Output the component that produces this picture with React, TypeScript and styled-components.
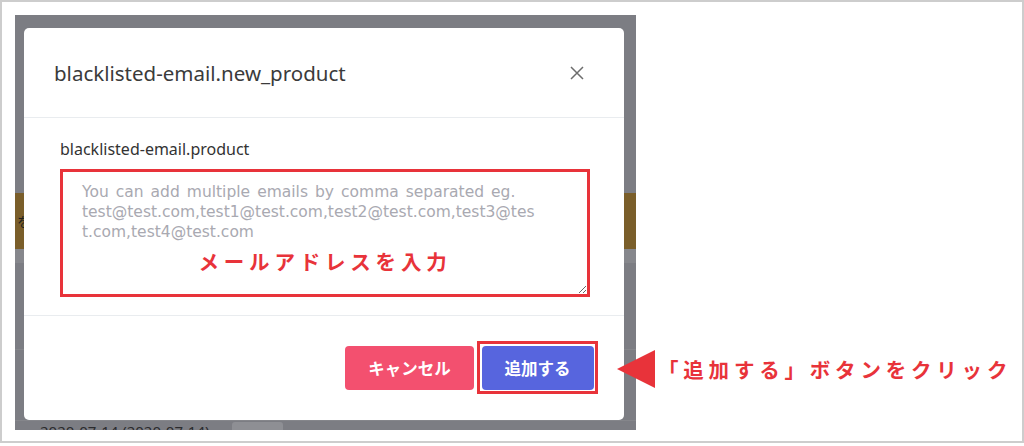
import React from "react"
import styled, { createGlobalStyle } from "styled-components"

const GlobalStyle = createGlobalStyle`
    html, body {
        margin: 0;
        padding: 0;
        background: #ffffff;
    }
    body {
        font-family: "Noto Sans", "Noto Sans CJK JP", sans-serif;
    }
    * {
        box-sizing: border-box;
    }
`

const colors = {
    annotation: "#e8333a",
    dim: "#7c7d83",
    divider: "#e9ecef",
    cancel: "#f3506f",
    primary: "#5765de",
}

const Frame = styled.div`
    width: 1024px;
    height: 443px;
    border: 2px solid #cdcdcd;
    display: flex;
    align-items: flex-start;
    padding: 13px 0 0 13px;
`

// the dimmed app screenshot
const Screen = styled.div`
    position: relative;
    flex-shrink: 0;
    width: 621px;
    height: 415px;
    background: ${colors.dim};
    overflow: hidden;
`

const Page = styled.div`
    display: flex;
    flex-direction: column;
    height: 100%;
    & > * {
        flex-shrink: 0;
    }
`
const PageTop = styled.div`
    height: 178px;
`
const Banner = styled.div`
    height: 56px;
    background: #7a5e2a;
    color: #1f1f1f;
    font-family: "Noto Sans CJK JP", sans-serif;
    font-size: 14px;
    line-height: 56px;
    padding-left: 2px;
    white-space: nowrap;
`
const BannerGap = styled.div`
    height: 14px;
    background: #86878c;
`
const TableRow = styled.div<{ h: number }>`
    height: ${p => p.h}px;
    border-bottom: 1px solid #85868b;
`
const DateRow = styled.div`
    display: flex;
    align-items: flex-start;
    padding-left: 25px;
`
const DateCell = styled.div`
    width: 192px;
    font-size: 15px;
    line-height: 20px;
    color: #2b2b2e;
`
const DetailButton = styled.div`
    width: 51px;
    height: 28px;
    margin-top: 1px;
    background: #8e8f94;
    border-radius: 3px;
    color: #4a4a4e;
    font-family: "Noto Sans CJK JP", sans-serif;
    font-size: 13px;
    display: flex;
    align-items: center;
    justify-content: center;
`

const Modal = styled.div`
    position: absolute;
    top: 13px;
    left: 9px;
    right: 12px;
    bottom: 10px;
    background: #ffffff;
    border-radius: 5px;
    display: flex;
    flex-direction: column;
`
const Header = styled.div`
    height: 90px;
    flex-shrink: 0;
    display: flex;
    align-items: center;
    justify-content: space-between;
    padding: 0 40px 0 30px;
    border-bottom: 1px solid ${colors.divider};
`
const Title = styled.h5`
    margin: 0;
    font-family: "Noto Sans", sans-serif;
    font-weight: 400;
    font-size: 20.5px;
    color: #3b3b3b;
`
const CloseButton = styled.button`
    border: none;
    background: none;
    padding: 0;
    width: 14px;
    height: 14px;
    display: flex;
    color: #6d6d6d;
`

const Body = styled.div`
    padding: 20px 34px 18px 36px;
    border-bottom: 1px solid ${colors.divider};
`
const Label = styled.div`
    font-size: 16px;
    line-height: 22px;
    color: #333333;
    margin-bottom: 9px;
`
const Field = styled.div`
    position: relative;
    height: 128px;
    border: 3px solid ${colors.annotation};
`
const TextArea = styled.textarea`
    display: block;
    width: 100%;
    height: 100%;
    border: none;
    outline: none;
    resize: vertical;
    padding: 10px 8px 0 19px;
    font-family: "DejaVu Sans", sans-serif;
    font-size: 15.5px;
    line-height: 20px;
    word-spacing: 2.1px;
    color: #333;
    &::placeholder {
        color: #a9a9b1;
    }
`
const FieldNote = styled.div`
    position: absolute;
    left: 0;
    right: 0;
    top: 77px;
    display: flex;
    justify-content: center;
    font-family: "Noto Sans CJK JP", sans-serif;
    font-weight: 700;
    font-size: 20.5px;
    line-height: 24px;
    letter-spacing: 4.8px;
    color: ${colors.annotation};
    pointer-events: none;
`

const Footer = styled.div`
    flex: 1;
    display: flex;
    justify-content: flex-end;
    align-items: flex-start;
    gap: 3px;
    padding: 25px 26px 0 0;
`
const Button = styled.button<{ variant: "cancel" | "primary" }>`
    height: 44px;
    width: ${p => p.variant === "cancel" ? 129 : 112}px;
    margin-top: ${p => p.variant === "cancel" ? 5 : 0}px;
    border: none;
    border-radius: 4px;
    background: ${p => p.variant === "cancel" ? colors.cancel : colors.primary};
    color: #ffffff;
    font-family: "Noto Sans CJK JP", sans-serif;
    font-weight: 700;
    font-size: 16.5px;
`
const Highlight = styled.div`
    border: 3px solid ${colors.annotation};
    padding: 1.5px;
    display: flex;
`

const Callout = styled.div`
    display: flex;
    align-items: center;
    gap: 3px;
    margin-top: 335px;
    margin-left: -19px;
    position: relative;
`
const Arrow = styled.div`
    width: 0;
    height: 0;
    border-top: 19px solid transparent;
    border-bottom: 19px solid transparent;
    border-right: 38px solid ${colors.annotation};
`
const CalloutText = styled.div`
    font-family: "Noto Sans CJK JP", sans-serif;
    font-weight: 700;
    font-size: 20.5px;
    letter-spacing: 4.8px;
    color: ${colors.annotation};
    white-space: nowrap;
`

const App: React.FC = () => {
    return (
        <>
            <GlobalStyle />
            <Frame>
                <Screen>
                    <Page>
                        <PageTop />
                        <Banner>を確認してください</Banner>
                        <BannerGap />
                        <TableRow h={87} />
                        <TableRow h={71} />
                        <DateRow>
                            <DateCell>2020-07-14 (2020-07-14)</DateCell>
                            <DetailButton>詳細</DetailButton>
                        </DateRow>
                    </Page>
                    <Modal>
                        <Header>
                            <Title>blacklisted-email.new_product</Title>
                            <CloseButton aria-label="close">
                                <svg width="14" height="14" viewBox="0 0 14 14">
                                    <path d="M1 1 L13 13 M13 1 L1 13" stroke="currentColor" strokeWidth="1.5" fill="none" />
                                </svg>
                            </CloseButton>
                        </Header>
                        <Body>
                            <Label>blacklisted-email.product</Label>
                            <Field>
                                <TextArea placeholder={"You can add multiple emails by comma separated eg.\ntest@test.com,test1@test.com,test2@test.com,test3@tes\nt.com,test4@test.com"} />
                                <FieldNote>メールアドレスを入力</FieldNote>
                            </Field>
                        </Body>
                        <Footer>
                            <Button variant="cancel">キャンセル</Button>
                            <Highlight>
                                <Button variant="primary">追加する</Button>
                            </Highlight>
                        </Footer>
                    </Modal>
                </Screen>
                <Callout>
                    <Arrow />
                    <CalloutText>「追加する」ボタンをクリック</CalloutText>
                </Callout>
            </Frame>
        </>
    )
}

export default App
